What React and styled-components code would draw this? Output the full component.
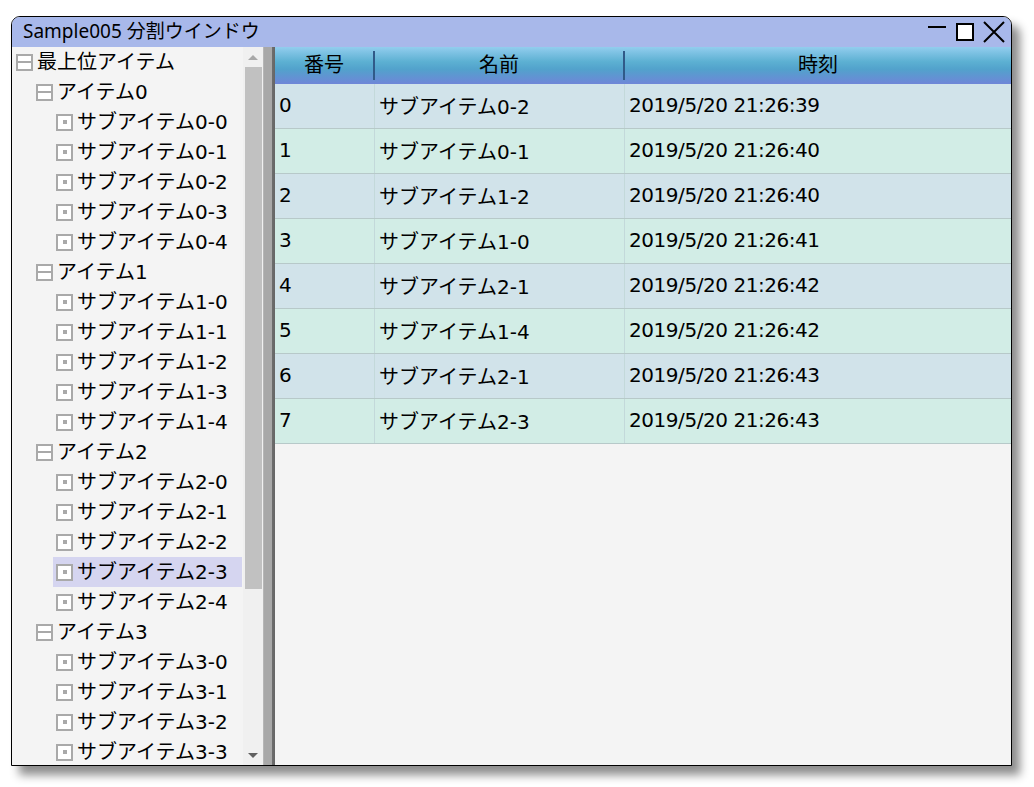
import React from 'react';
import styled, { createGlobalStyle } from 'styled-components';

const Global = createGlobalStyle`
  html, body {
    margin: 0;
    padding: 0;
    background: #ffffff;
  }
  body {
    font-family: "DejaVu Sans", "Noto Sans CJK JP", sans-serif;
  }
`

const Page = styled.div`
  padding: 16px 0 0 11px;
  width: 1034px;
  height: 787px;
  box-sizing: border-box;
`

const Window = styled.div`
  width: 1001px;
  height: 750px;
  box-sizing: border-box;
  border: 1px solid #000;
  border-radius: 9px 9px 0 0;
  overflow: hidden;
  display: flex;
  flex-direction: column;
  box-shadow: 8px 9px 10px rgba(0, 0, 0, 0.45);
  background: #f4f4f4;
`

const TitleBar = styled.div`
  height: 30px;
  flex: none;
  background: #a8b8ea;
  display: flex;
  align-items: center;
  padding-left: 11px;
  color: #000;
  font-family: "Noto Sans", "Noto Sans CJK JP", sans-serif;
  font-size: 19px;
`

const Title = styled.div`
  flex: 1;
  line-height: 28px;
  height: 30px;
`

const Controls = styled.div`
  display: flex;
  align-items: center;
  gap: 8px;
  padding-right: 6px;
  height: 100%;
`

const Body = styled.div`
  flex: 1;
  display: flex;
  min-height: 0;
`

const TreePane = styled.div`
  width: 231px;
  flex: none;
  overflow: hidden;
  background: #f4f4f4;
`

const TreeRow = styled.div`
  height: 30px;
  display: flex;
  padding-left: ${p => 1 + p.level * 20}px;
  padding-right: 1px;
`

const TreeItem = styled.div`
  flex: 1;
  display: flex;
  align-items: center;
  padding-left: 3px;
  font-size: 20px;
  line-height: 28px;
  color: #000;
  white-space: nowrap;
  background: ${p => (p.selected ? '#d5d5f0' : 'transparent')};
`

const Toggle = styled.span`
  width: 17px;
  height: 17px;
  box-sizing: border-box;
  border: 2px solid #a9a9a9;
  background: #fff;
  margin-right: 4px;
  flex: none;
  display: flex;
  align-items: center;
  justify-content: center;
  &::after {
    content: '';
    display: block;
    background: #a9a9a9;
    width: ${p => (p.leaf ? '4px' : '13px')};
    height: ${p => (p.leaf ? '4px' : '2px')};
  }
`

const Scrollbar = styled.div`
  width: 20px;
  flex: none;
  background: #f0f0f0;
  display: flex;
  flex-direction: column;
  align-items: center;
`

const Arrow = styled.div`
  height: 20px;
  width: 100%;
  display: flex;
  align-items: center;
  justify-content: center;
  &::after {
    content: '';
    border-left: 5px solid transparent;
    border-right: 5px solid transparent;
    ${p => (p.down ? 'border-top: 5px solid #606060;' : 'border-bottom: 5px solid #a8a8a8;')}
  }
`

const Track = styled.div`
  flex: 1;
  width: 100%;
  display: flex;
  justify-content: center;
`

const Thumb = styled.div`
  width: 17px;
  height: 522px;
  background: #c1c1c1;
`

const Splitter = styled.div`
  width: 12px;
  flex: none;
  background: linear-gradient(90deg, #b6b6b6 0, #b6b6b6 1px, #a8a8a8 1px, #a8a8a8 72%, #6e6e6e 72%, #666666 100%);
`

const GridPane = styled.div`
  flex: 1;
  display: flex;
  flex-direction: column;
  background: #f4f4f4;
`

const Columns = '100px 250px 1fr';

const Header = styled.div`
  height: 37px;
  flex: none;
  display: grid;
  grid-template-columns: ${Columns};
  background: linear-gradient(180deg, #92cdee 0%, #5cb0d2 40%, #52a2cc 60%, #6f86d8 100%);
  font-size: 20px;
  color: #000;
`

const HeadCell = styled.div`
  display: flex;
  align-items: center;
  justify-content: center;
  border-right: ${p => (p.last ? 'none' : '2px solid #305a88')};
  margin: 4px 0 4px;
  padding-bottom: 2px;
  line-height: 26px;
`

const Row = styled.div`
  height: 45px;
  flex: none;
  box-sizing: border-box;
  display: grid;
  grid-template-columns: ${Columns};
  background: ${p => (p.odd ? '#d2ede6' : '#d1e3ea')};
  border-bottom: 1px solid #b7c9c9;
  font-size: 20px;
  color: #000;
`

const Cell = styled.div`
  display: flex;
  align-items: center;
  padding-left: 4px;
  padding-bottom: 2px;
  border-right: ${p => (p.last ? 'none' : '1px solid #c3d9da')};
  white-space: nowrap;
  letter-spacing: ${p => (p.last ? '-0.45px' : '0')};
`

const tree = [
  { level: 0, text: '最上位アイテム' },
];
for (let i = 0; i < 4; i++) {
  tree.push({ level: 1, text: `アイテム${i}` });
  for (let j = 0; j < 5; j++) {
    if (i === 3 && j > 3) break;
    tree.push({ level: 2, text: `サブアイテム${i}-${j}`, leaf: true, selected: i === 2 && j === 3 });
  }
}

const rows = [
  ['0', 'サブアイテム0-2', '2019/5/20 21:26:39'],
  ['1', 'サブアイテム0-1', '2019/5/20 21:26:40'],
  ['2', 'サブアイテム1-2', '2019/5/20 21:26:40'],
  ['3', 'サブアイテム1-0', '2019/5/20 21:26:41'],
  ['4', 'サブアイテム2-1', '2019/5/20 21:26:42'],
  ['5', 'サブアイテム1-4', '2019/5/20 21:26:42'],
  ['6', 'サブアイテム2-1', '2019/5/20 21:26:43'],
  ['7', 'サブアイテム2-3', '2019/5/20 21:26:43'],
];

function App() {
  return (
    <Page>
      <Global />
      <Window>
        <TitleBar>
          <Title>Sample005 分割ウインドウ</Title>
          <Controls>
            <svg width="20" height="20" viewBox="0 0 20 20">
              <line x1="1" y1="5" x2="19" y2="5" stroke="#000" strokeWidth="2" />
            </svg>
            <svg width="20" height="20" viewBox="0 0 20 20">
              <rect x="2" y="2" width="16" height="16" fill="#fff" stroke="#000" strokeWidth="2" />
            </svg>
            <svg width="22" height="22" viewBox="0 0 22 22">
              <path d="M1 1 L21 21 M21 1 L1 21" stroke="#000" strokeWidth="2" />
            </svg>
          </Controls>
        </TitleBar>
        <Body>
          <TreePane>
            {tree.map((t, i) => (
              <TreeRow key={i} level={t.level}>
                <TreeItem selected={t.selected}>
                  <Toggle leaf={t.leaf} />
                  {t.text}
                </TreeItem>
              </TreeRow>
            ))}
          </TreePane>
          <Scrollbar>
            <Arrow />
            <Track><Thumb /></Track>
            <Arrow down />
          </Scrollbar>
          <Splitter />
          <GridPane>
            <Header>
              <HeadCell>番号</HeadCell>
              <HeadCell>名前</HeadCell>
              <HeadCell last>時刻</HeadCell>
            </Header>
            {rows.map((r, i) => (
              <Row key={i} odd={i % 2 === 1}>
                <Cell>{r[0]}</Cell>
                <Cell>{r[1]}</Cell>
                <Cell last>{r[2]}</Cell>
              </Row>
            ))}
          </GridPane>
        </Body>
      </Window>
    </Page>
  );
}

export default App;
